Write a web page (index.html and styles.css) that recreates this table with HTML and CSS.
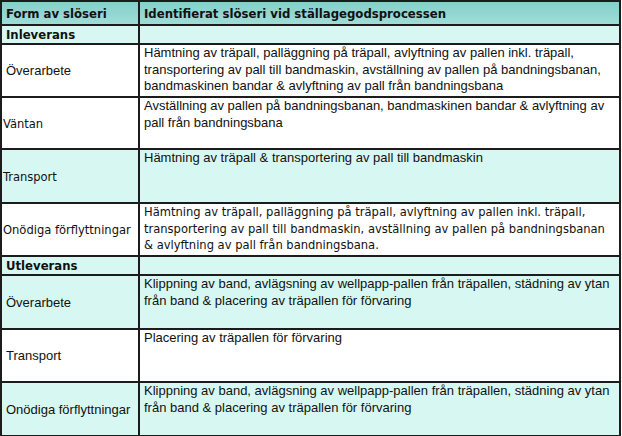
FILE: index.html
```html
<!DOCTYPE html>
<html>
<head>
<meta charset="utf-8">
<link rel="stylesheet" href="styles.css">
</head>
<body>
<table class="grid">
  <colgroup><col class="c1"><col class="c2"></colgroup>
  <tr class="head h24">
    <th class="lab">Form av slöseri</th>
    <th class="desc">Identifierat slöseri vid ställagegodsprocessen</th>
  </tr>
  <tr class="cyan h19">
    <td class="lab sect">Inleverans</td>
    <td class="desc"></td>
  </tr>
  <tr class="white h53">
    <td class="lab">Överarbete</td>
    <td class="desc">Hämtning av träpall, palläggning på träpall, avlyftning av pallen inkl. träpall, transportering av pall till bandmaskin, avställning av pallen på bandningsbanan, bandmaskinen bandar &amp; avlyftning av pall från bandningsbana</td>
  </tr>
  <tr class="white h52">
    <td class="lab tah">Väntan</td>
    <td class="desc">Avställning av pallen på bandningsbanan, bandmaskinen bandar &amp; avlyftning av pall från bandningsbana</td>
  </tr>
  <tr class="cyan h54">
    <td class="lab tah">Transport</td>
    <td class="desc">Hämtning av träpall &amp; transportering av pall till bandmaskin</td>
  </tr>
  <tr class="white h53">
    <td class="lab tah">Onödiga förflyttningar</td>
    <td class="desc tah">Hämtning av träpall, palläggning på träpall, avlyftning av pallen inkl. träpall, transportering av pall till bandmaskin, avställning av pallen på bandningsbanan &amp; avlyftning av pall från bandningsbana.</td>
  </tr>
  <tr class="cyan h19">
    <td class="lab sect">Utleverans</td>
    <td class="desc"></td>
  </tr>
  <tr class="cyan h54">
    <td class="lab">Överarbete</td>
    <td class="desc">Klippning av band, avlägsning av wellpapp-pallen från träpallen, städning av ytan från band &amp; placering av träpallen för förvaring</td>
  </tr>
  <tr class="white h53">
    <td class="lab">Transport</td>
    <td class="desc">Placering av träpallen för förvaring</td>
  </tr>
  <tr class="cyan h54">
    <td class="lab">Onödiga förflyttningar</td>
    <td class="desc">Klippning av band, avlägsning av wellpapp-pallen från träpallen, städning av ytan från band &amp; placering av träpallen för förvaring</td>
  </tr>
</table>
</body>
</html>
```
FILE: styles.css
```css
html, body {
  margin: 0;
  padding: 0;
  background: #ffffff;
}
.grid {
  border-collapse: collapse;
  table-layout: fixed;
  width: 621px;
  font-family: "Liberation Sans", Arial, sans-serif;
  font-size: 13px;
  color: #111;
}
.c1 { width: 138px; }
.grid th, .grid td {
  border: 2px solid #1c1c1c;
  padding: 0;
}
.head {
  background: linear-gradient(#84cfc9, #a0ddd7);
}
.head th {
  font-family: "DejaVu Sans Condensed", "DejaVu Sans", sans-serif;
  font-weight: bold;
  font-size: 13px;
  text-align: left;
  vertical-align: middle;
}
.head th.lab { padding-left: 4px; }
.head th.desc { padding-left: 4px; }
.cyan { background: #d7f8f2; }
.white { background: #ffffff; }
.h19 { height: 19px; }
.h24 { height: 24px; }
.h52 { height: 52px; }
.h53 { height: 53px; }
.h54 { height: 54px; }
td.lab {
  vertical-align: middle;
  padding-left: 4px;
  white-space: nowrap;
}
td.sect {
  font-family: "DejaVu Sans Condensed", "DejaVu Sans", sans-serif;
  font-weight: bold;
  font-size: 13px;
  padding-left: 4px;
}
td.desc {
  vertical-align: top;
  padding: 0 4px 0 4px;
  line-height: 16.5px;
}
.tah {
  font-family: "DejaVu Sans Condensed", "DejaVu Sans", sans-serif;
  font-size: 12.8px;
}
td.lab.tah { padding-left: 1px; }
```
